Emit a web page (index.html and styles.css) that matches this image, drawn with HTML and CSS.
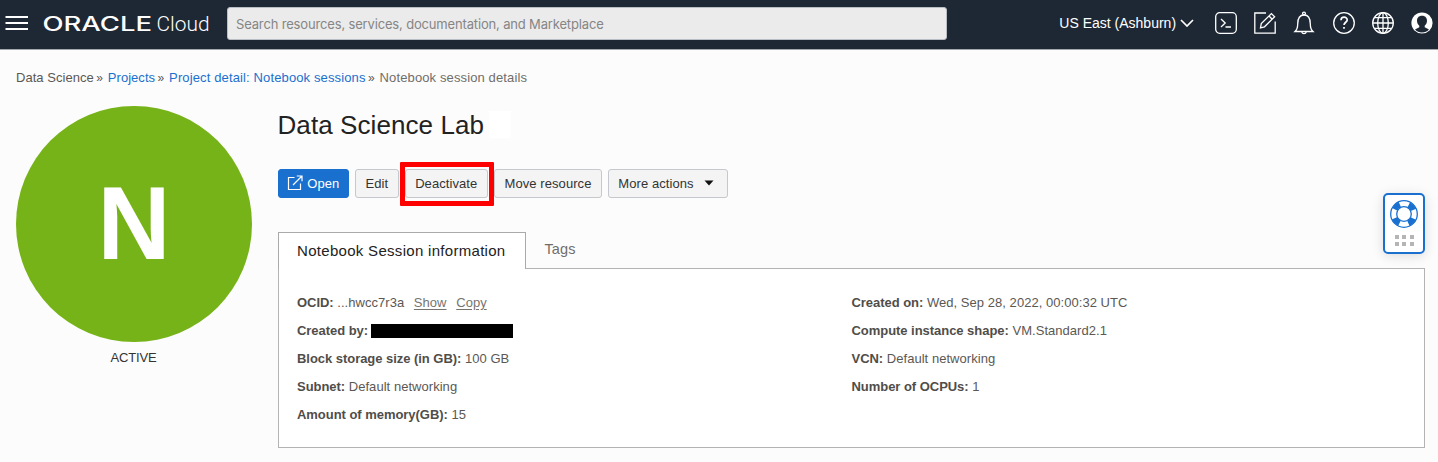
FILE: index.html
```html
<!DOCTYPE html>
<html lang="en">
<head>
<meta charset="utf-8">
<title>Notebook session details</title>
<link rel="stylesheet" href="styles.css">
</head>
<body>
<header class="topbar">
  <svg class="menu" width="24" height="16" viewBox="0 0 24 16"><path d="M0.5 2H23M0.5 8H23M0.5 14H23" stroke="#fff" stroke-width="2"/></svg>
  <svg class="logo" width="170" height="24" viewBox="0 0 170 24">
    <text class="brand" x="-.5" y="19.8" textLength="109.500" lengthAdjust="spacingAndGlyphs">ORACLE</text>
    <text class="product" x="113.500" y="19.8" textLength="53" lengthAdjust="spacingAndGlyphs">Cloud</text>
  </svg>
  <div class="search">Search resources, services, documentation, and Marketplace</div>
  <div class="region">US East (Ashburn)<svg width="14" height="8" viewBox="0 0 14 8"><path d="M1 1L7 7L13 1" fill="none" stroke="#fff" stroke-width="1.7"/></svg></div>
  <nav class="tools">
    <svg viewBox="0 0 24 24"><rect x="1.7" y="1.7" width="20.6" height="20.6" rx="4"/><path d="M7 8l4.2 4L7 16M11.5 16H17"/></svg>
    <svg viewBox="0 0 24 24"><path d="M13 2H1.8v20.2H22.2V10.5"/><path d="M7.5 16.800l.8-4.300L18.400 2.600l3.200 3.200L11.500 15.800zM16 5l3.200 3.200"/></svg>
    <svg viewBox="0 0 24 24"><path d="M3 20.500c2-1.800 2.700-4 2.700-7.500C5.700 7.500 8 4 12 4s6.300 3.500 6.300 9c0 3.500.7 5.700 2.700 7.500z"/><circle cx="12" cy="2.500" r="1.400"/><path d="M9.800 21c.4 2.200 4 2.200 4.400 0"/></svg>
    <svg viewBox="0 0 24 24"><circle cx="12" cy="12" r="10.300"/><path d="M9 9.300c0-4.100 6.200-4 6.200-.4 0 2.300-3.200 2.500-3.200 5.200M12 15.900v1.800" stroke-width="1.700"/></svg>
    <svg viewBox="0 0 24 24"><circle cx="12" cy="12" r="10.300"/><ellipse cx="12" cy="12" rx="5.300" ry="10.300"/><path d="M12 1.700v20.600M1.700 12h20.600M3.200 6.600h17.600M3.200 17.400h17.600"/></svg>
    <svg viewBox="0 0 24 24"><circle cx="12" cy="12" r="10.600" fill="#fff" stroke="none"/><path class="person" d="M12 4.800c-3.400 0-5 2.200-5 4.900 0 2.300 1 4 2.300 5v1.600L5 18.400C8 22.400 16 22.400 19 18.400l-4.300-2.100v-1.600C16 13.700 17 12 17 9.700c0-2.700-1.600-4.900-5-4.900z"/></svg>
  </nav>
</header>

<div class="crumbs"><span class="root">Data Science</span><i>»</i><a>Projects</a><i>»</i><a class="wide">Project detail: Notebook sessions</a><i>»</i><span class="here">Notebook session details</span></div>

<main class="page">
  <aside class="status">
    <div class="badge"><svg width="236" height="236"><text class="initial" x="118" y="152.500" text-anchor="middle" textLength="73" lengthAdjust="spacingAndGlyphs">N</text></svg></div>
    <div class="state">ACTIVE</div>
  </aside>
  <section class="detail">
    <h1><span>Data Science Lab</span><b class="patch"></b></h1>
    <div class="actions">
      <button class="btn primary"><svg width="16" height="16" viewBox="0 0 16 16"><path d="M7.500 2.500H1.500V14.500H13.500V8.500M6 10L14.500 1.500M9.800 1H15V6.200" fill="none" stroke="#fff" stroke-width="1.200"/></svg>Open</button>
      <button class="btn edit">Edit</button>
      <button class="btn deactivate">Deactivate<span class="mark"></span></button>
      <button class="btn move">Move resource</button>
      <button class="btn more">More actions<svg width="10" height="6" viewBox="0 0 10 6"><path d="M0.500 .5H9.500L5 5.500z" fill="#111"/></svg></button>
    </div>
    <div class="tabs"><div class="tab active">Notebook Session information</div><div class="tab">Tags</div></div>
    <div class="panel">
      <div class="col">
        <p><strong>OCID:</strong> ...hwcc7r3a <a class="first">Show</a> <a class="next">Copy</a></p>
        <p class="by"><strong>Created by:</strong><span class="redacted"></span></p>
        <p><strong>Block storage size (in GB):</strong> 100 GB</p>
        <p><strong>Subnet:</strong> Default networking</p>
        <p><strong>Amount of memory(GB):</strong> 15</p>
      </div>
      <div class="col">
        <p><strong>Created on:</strong> Wed, Sep 28, 2022, 00:00:32 UTC</p>
        <p><strong>Compute instance shape:</strong> VM.Standard2.1</p>
        <p><strong>VCN:</strong> Default networking</p>
        <p><strong>Number of OCPUs:</strong> 1</p>
      </div>
    </div>
  </section>
</main>

<div class="help">
  <svg width="30" height="30" viewBox="0 0 30 30"><circle cx="15" cy="15" r="13.300" fill="#fff" stroke="#1a70cf" stroke-width="1.300"/><circle cx="15" cy="15" r="10.300" fill="none" stroke="#1a70cf" stroke-width="6" stroke-dasharray="7 9.179" stroke-dashoffset="-4.590"/><circle cx="15" cy="15" r="7.300" fill="#fff" stroke="#1a70cf" stroke-width="1.300"/></svg>
  <div class="dots"><i></i><i></i><i></i><i></i><i></i><i></i></div>
</div>
</body>
</html>
```
FILE: styles.css
```css
* { box-sizing: border-box; }
body { margin: 0; height: 462px; overflow: hidden; background: #fcfcfc; font: 13px "Liberation Sans", Arial, sans-serif; color: #5b5854; letter-spacing: .04px; }
.topbar { display: flex; align-items: center; height: 50px; padding: 0 4px 3px 5px; background: #1e2835; border-bottom: 1px solid #a5a9ae; }
.menu { flex: none; }
.logo { flex: none; margin-left: 14px; }
.brand { font: 500 19.500px Inter, sans-serif; fill: #fff; letter-spacing: 0; }
.product { font: 300 20px Roboto, sans-serif; fill: #fff; letter-spacing: 0; }
.search { flex: none; width: 720px; height: 33px; margin-left: 14px; padding-left: 8px; border: 1px solid #b9bec4; border-radius: 3px; background: #ebebeb; color: #858585; font: 13px/32px Inter, sans-serif; letter-spacing: -.16px; white-space: nowrap; }
.region { display: flex; align-items: center; gap: 4px; margin-left: auto; color: #fff; font-size: 14px; letter-spacing: 0; white-space: nowrap; }
.tools { display: flex; gap: 15.200px; margin-left: 20px; margin-right: 0; }
.tools svg { width: 24px; height: 24px; fill: none; stroke: #fff; stroke-width: 1.300; }
.tools .person { fill: #1e2835; stroke: none; }
.crumbs { display: flex; height: 55px; margin-bottom: 1px; padding-left: 16px; align-items: center; white-space: nowrap; }
.crumbs a { color: #1a70cf; }
.crumbs .wide { letter-spacing: .13px; }
.crumbs i { width: 14px; padding-left: 2.500px; font-style: normal; font-size: 12px; letter-spacing: 0; line-height: 14px; }
.here { color: #706e6b; letter-spacing: .12px; }
.page { display: flex; padding-left: 16px; }
.status { width: 235px; margin-right: 26.500px; }
.badge { width: 235.500px; height: 236px; border-radius: 50%; background: #76b318; }
.badge svg { display: block; }
.initial { font: bold 103px "Liberation Sans", Arial, sans-serif; fill: #fff; letter-spacing: 0; }
.state { margin-top: 8px; text-align: center; color: #333; letter-spacing: -.2px; }
.detail { width: 1147.500px; }
h1 { display: flex; align-items: center; height: 38px; margin: 0 0 25px; color: #222; font-size: 26px; font-weight: 400; letter-spacing: .08px; }
.patch { width: 22px; height: 27px; margin: -2px 0 0 5px; background: #fff; }
.actions { display: flex; gap: 6px; height: 28.500px; }
.btn { display: flex; align-items: center; justify-content: center; position: relative; padding: 0; border: 1px solid #c5c8cc; border-radius: 3px; background: #f4f4f4; color: #333; font: 13px "Liberation Sans", Arial, sans-serif; letter-spacing: .08px; white-space: nowrap; }
.primary { width: 71.500px; gap: 4px; border-color: #1a70cf; background: #1a70cf; color: #fff; }
.edit { width: 43.500px; }
.deactivate { width: 83.500px; }
.move { width: 108px; }
.more { width: 120px; gap: 10px; padding-right: 4px; }
.mark { position: absolute; z-index: 2; top: -8px; left: -6px; width: 94px; height: 44px; border: 5px solid #f00; border-radius: 1px; }
.tabs { display: flex; height: 37px; margin-top: 34.500px; }
.tab { width: 68px; padding-top: 9px; text-align: center; font-size: 14.500px; letter-spacing: .1px; color: #706e6b; white-space: nowrap; }
.tab.active { position: relative; z-index: 1; width: 248.500px; padding: 9px 0 0 18.500px; border: 1px solid #aaa; border-bottom: 0; background: #fff; text-align: left; color: #222; font-size: 15px; letter-spacing: .3px; }
.panel { display: flex; height: 180px; margin-top: -1px; padding: 20px 0 0 18.500px; border: 1px solid #b3b3b3; background: #fff; }
.col { width: 554.500px; }
.col p { height: 28px; margin: 0; line-height: 28px; white-space: nowrap; }
.col strong { color: #504d49; letter-spacing: -.04px; }
.col a { color: #77746f; text-decoration: underline; text-underline-offset: 2px; }
.col a.first { margin-left: 6px; }
.col a.next { margin-left: 6px; }
.by { display: flex; align-items: center; }
.redacted { width: 142px; height: 14px; margin-left: 3px; background: #000; }
.help { position: absolute; top: 193px; left: 1383px; width: 42px; height: 61px; padding-top: 4px; border: 2px solid #1a70cf; border-radius: 5px; background: #fff; box-shadow: 0 2px 12px #0002; text-align: center; }
.help svg { display: block; margin: 0 auto; }
.dots { display: grid; grid-template-columns: repeat(3, 4px); gap: 3px; justify-content: center; margin-top: 6px; column-gap: 3.500px; }
.dots i { height: 4px; background: #b5b5b5; }
```
